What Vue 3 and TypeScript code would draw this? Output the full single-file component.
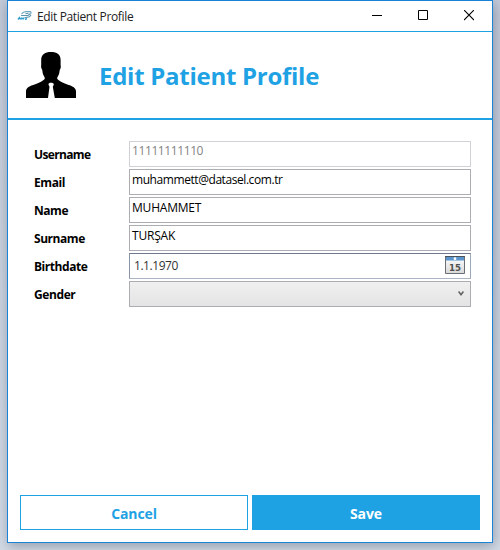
<script setup lang="ts">
import { ref } from 'vue'

interface TextField {
  id: string
  label: string
  value: string
  disabled?: boolean
}

const fields = ref<TextField[]>([
  { id: 'username', label: 'Username', value: '11111111110', disabled: true },
  { id: 'email', label: 'Email', value: 'muhammett@datasel.com.tr' },
  { id: 'name', label: 'Name', value: 'MUHAMMET' },
  { id: 'surname', label: 'Surname', value: 'TURŞAK' },
])
const birthdate = ref('1.1.1970')
</script>

<template>
  <div class="desktop">
    <main class="window">
      <div class="titlebar">
        <svg class="app-icon" width="16" height="14" viewBox="0 0 16 14" fill="none">
          <path d="M4.500 5C6 2.800 8 2.500 9.500 2.600h3.500c1.200.1 1.300 1.300.6 2" stroke="#6fa6c0" stroke-width="1.200" />
          <path d="M4 6.500h7L13.500 4.500M7.500 8.800l5-1 1.500-2M8.500 4.800l3-.5" stroke="#5b93ad" stroke-width="1.100" />
          <path d="M1 10.500l1.500-2 1 2M4.500 8.500v2M6.500 8.500v2M5 9.500h2M8 10.300l2-.5" stroke="#2f9fce" stroke-width="1.400" />
        </svg>
        <span class="window-title">Edit Patient Profile</span>
        <div class="window-controls">
          <svg width="10" height="11" viewBox="0 0 10 11"><path d="M0 5.500h10" stroke="#000" /></svg>
          <svg width="10" height="11" viewBox="0 0 10 11"><path d="M.5.5h9v9h-9z" fill="none" stroke="#000" /></svg>
          <svg width="10" height="11" viewBox="0 0 10 11"><path d="M0 0l10 10M10 0L0 10" stroke="#000" stroke-width="1.100" /></svg>
        </div>
      </div>

      <header class="header">
        <svg class="avatar" width="50" height="46" viewBox="0 0 50 46">
          <path d="M15.200 8C15.200 2.500 19 0 25 0s9.600 2.500 9.600 8v5c.5 1.500.2 3.500-.9 5-.2 2.500-.6 4.500-1.900 6.500-.6 1-.6 1.700-.5 2.500 1.700 2 4.500 3.200 7.500 4.500 5 2 11.200 3 11.200 8V46H0v-6.500c0-5 6-6 11.200-8 3-1.300 5.800-2.500 7.500-4.500.1-.8.100-1.500-.5-2.500-1.300-2-1.700-4-1.900-6.500-1.100-1.500-1.400-3.500-1.100-5z" />
          <path d="M22.700 31.500l1.300-.7h2l1.500.7.300 1.300-1 2 2 11.200h-6.800l1.500-11.200-1-2z" fill="#fff" />
        </svg>
        <h1 class="heading">Edit Patient Profile</h1>
      </header>

      <form class="form" @submit.prevent>
        <div v-for="field in fields" :key="field.id" class="row">
          <label class="label" :class="'label-' + field.id">{{ field.label }}</label>
          <div class="box" :class="['box-' + field.id, { disabled: field.disabled }]">{{ field.value }}</div>
        </div>
        <div class="row">
          <label class="label label-birthdate">Birthdate</label>
          <div class="box date">
            <span class="date-text">{{ birthdate }}</span>
            <svg class="calendar" width="20" height="18" viewBox="0 0 20 18">
              <defs>
                <linearGradient id="page" x1="0" y1="0" x2="0" y2="1">
                  <stop offset="0" stop-color="#fff" />
                  <stop offset="1" stop-color="#d8d8d8" />
                </linearGradient>
              </defs>
              <path d="M.5.5h19v17H.5z" fill="url(#page)" stroke="#6b6f73" />
              <path d="M1 1h18v3.500H1z" fill="#5a94cc" />
              <path d="M0 .5h20" stroke="#4b5258" />
              <circle cx="10" cy="2.700" r="1.400" fill="#fff" />
              <text x="4" y="15" textLength="12" lengthAdjust="spacingAndGlyphs" class="calendar-day">15</text>
            </svg>
          </div>
        </div>
        <div class="row">
          <label class="label label-gender">Gender</label>
          <div class="box select">
            <svg width="6" height="5" viewBox="0 0 6 5"><path d="M.6.5L3 3.700 5.400.5" fill="none" stroke="#606060" stroke-width="1.500" /></svg>
          </div>
        </div>
      </form>

      <footer class="actions">
        <button type="button" class="button cancel">Cancel</button>
        <button type="button" class="button save">Save</button>
      </footer>
    </main>
  </div>
</template>

<style>
body {
  margin: 0;
}
</style>

<style scoped>
.desktop {
  box-sizing: border-box;
  width: 500px;
  height: 550px;
  padding: 0 7px 7px;
  overflow: hidden;
  background: linear-gradient(#c3cbd9, #d3dbe6);
  font-family: "Open Sans", "Noto Sans", sans-serif;
  font-size: 12px;
  color: #000;
}
.window {
  box-sizing: border-box;
  display: flex;
  flex-direction: column;
  width: 486px;
  height: 543px;
  border: 1px solid #1883d7;
  background: #fff;
  box-shadow: 1px 3px 12px rgba(50, 60, 80, 0.4);
}
.titlebar {
  box-sizing: border-box;
  display: flex;
  align-items: center;
  height: 31px;
  padding: 0 18px 1px 9px;
  border-bottom: 1px solid #1ea2e4;
}
.app-icon {
  margin-right: 4px;
}
.window-title {
  padding-top: 1px;
  color: #222;
  letter-spacing: -0.35px;
  white-space: nowrap;
}
.window-controls {
  display: flex;
  gap: 36px;
  margin-left: auto;
}
.header {
  box-sizing: border-box;
  display: flex;
  height: 88px;
  padding: 20px 0 0 18px;
  border-bottom: 2px solid #1ea2e4;
}
.heading {
  margin: 6px 0 0 23px;
  color: #1ea2e4;
  font-size: 24px;
  font-weight: 700;
  line-height: 36px;
  letter-spacing: -0.27px;
  white-space: nowrap;
}
.form {
  display: flex;
  flex-direction: column;
  gap: 2px;
  padding: 21px 21px 0 26px;
}
.row {
  display: flex;
  height: 26px;
}
.label {
  width: 95px;
  padding-top: 1px;
  font-weight: 700;
  line-height: 26px;
  letter-spacing: -0.45px;
}
.label-username {
  letter-spacing: -0.65px;
}
.label-gender,
.label-email {
  letter-spacing: -0.4px;
}
.box {
  box-sizing: border-box;
  width: 342px;
  height: 26px;
  padding-left: 2px;
  border: 1px solid #abadb3;
  line-height: 19px;
  letter-spacing: -0.2px;
  white-space: nowrap;
}
.box-username {
  line-height: 18px;
  letter-spacing: -0.4px;
}
.box-email {
  letter-spacing: -0.43px;
}
.disabled {
  border-color: #d0d1d4;
  color: #838383;
}
.date {
  display: flex;
  align-items: center;
  justify-content: space-between;
  padding: 0 5px 2px 4px;
  border-color: #6f7b8c #9ca9b8 #a9b5c2 #8996a5;
  color: #333;
  letter-spacing: -0.45px;
}
.calendar-day {
  fill: #505050;
  font-family: "DejaVu Sans", sans-serif;
  font-size: 9px;
  font-weight: 700;
  letter-spacing: 0;
}
.select {
  display: flex;
  align-items: center;
  justify-content: flex-end;
  padding: 0 6px 1px 0;
  background: linear-gradient(#f0f0f0, #e4e4e4);
}
.actions {
  display: flex;
  gap: 4px;
  margin-top: auto;
  padding: 0 12px 12px;
}
.button {
  box-sizing: border-box;
  width: 228px;
  height: 35px;
  padding: 2px 0 0;
  border: 1px solid #1ea2e4;
  font: 700 14px "Open Sans", "Noto Sans", sans-serif;
  letter-spacing: -0.1px;
}
.cancel {
  background: #fff;
  color: #1ea2e4;
}
.save {
  background: #1ea2e4;
  color: #fff;
}
</style>
